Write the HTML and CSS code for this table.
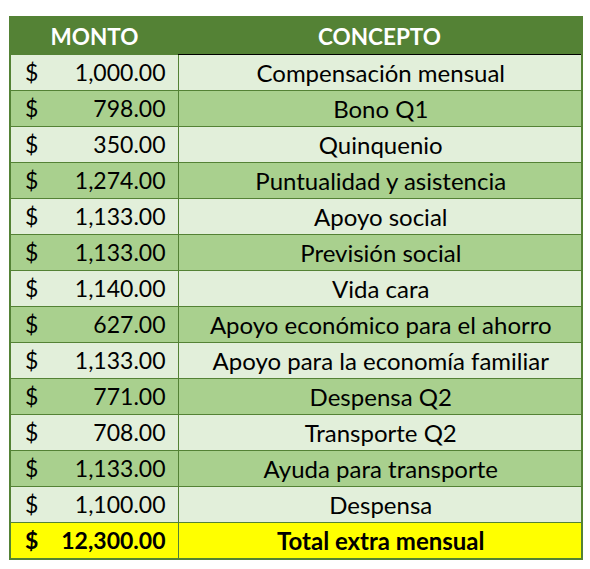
FILE: index.html
```html
<!DOCTYPE html>
<html lang="es">
<head>
<meta charset="utf-8">
<title>Monto y concepto</title>
<link rel="stylesheet" href="styles.css">
</head>
<body>
<table class="sheet">
  <thead>
    <tr><th class="h-monto">MONTO</th><th class="h-concepto">CONCEPTO</th></tr>
  </thead>
  <tbody>
    <tr class="light"><td class="amt"><span class="cur">$</span><span class="num">1,000.00</span></td><td class="txt">Compensación mensual</td></tr>
    <tr class="dark"><td class="amt"><span class="cur">$</span><span class="num">798.00</span></td><td class="txt">Bono Q1</td></tr>
    <tr class="light"><td class="amt"><span class="cur">$</span><span class="num">350.00</span></td><td class="txt">Quinquenio</td></tr>
    <tr class="dark"><td class="amt"><span class="cur">$</span><span class="num">1,274.00</span></td><td class="txt">Puntualidad y asistencia</td></tr>
    <tr class="light"><td class="amt"><span class="cur">$</span><span class="num">1,133.00</span></td><td class="txt">Apoyo social</td></tr>
    <tr class="dark"><td class="amt"><span class="cur">$</span><span class="num">1,133.00</span></td><td class="txt">Previsión social</td></tr>
    <tr class="light"><td class="amt"><span class="cur">$</span><span class="num">1,140.00</span></td><td class="txt">Vida cara</td></tr>
    <tr class="dark"><td class="amt"><span class="cur">$</span><span class="num">627.00</span></td><td class="txt">Apoyo económico para el ahorro</td></tr>
    <tr class="light"><td class="amt"><span class="cur">$</span><span class="num">1,133.00</span></td><td class="txt">Apoyo para la economía familiar</td></tr>
    <tr class="dark"><td class="amt"><span class="cur">$</span><span class="num">771.00</span></td><td class="txt">Despensa Q2</td></tr>
    <tr class="light"><td class="amt"><span class="cur">$</span><span class="num">708.00</span></td><td class="txt">Transporte Q2</td></tr>
    <tr class="dark"><td class="amt"><span class="cur">$</span><span class="num">1,133.00</span></td><td class="txt">Ayuda para transporte</td></tr>
    <tr class="light"><td class="amt"><span class="cur">$</span><span class="num">1,100.00</span></td><td class="txt">Despensa</td></tr>
    <tr class="total"><td class="amt"><span class="cur">$</span><span class="num">12,300.00</span></td><td class="txt">Total extra mensual</td></tr>
  </tbody>
</table>
</body>
</html>
```

FILE: styles.css
```css
html, body {
  margin: 0;
  padding: 0;
  background: #ffffff;
}

body {
  padding: 16px 0 0 9px;
  font-family: Lato, "Open Sans", sans-serif;
  color: #000000;
}

.sheet {
  border-collapse: collapse;
  width: 574px;
  border: 2px solid #548235;
  table-layout: fixed;
}

.sheet th {
  background: #548235;
  color: #ffffff;
  font-weight: 700;
  font-size: 22.5px;
  height: 36px;
  padding: 0;
  text-align: center;
  border: none;
}

.sheet th.h-monto {
  width: 167px;
}

.sheet th.h-concepto {
  border-bottom: 1px solid #000000;
}

.sheet td {
  height: 35px;
  padding: 0;
  border: 1px solid #548235;
  font-size: 24px;
  line-height: 1;
  vertical-align: middle;
}

.sheet td.amt {
  padding: 0 12px 0 14px;
  font-size: 23px;
}

.sheet td.amt .cur {
  float: left;
}

.sheet td.amt .num {
  float: right;
}

.sheet td.amt::after {
  content: "";
  display: block;
  clear: both;
}

.sheet td.txt {
  text-align: center;
  padding-left: 2px;
}

.light td {
  background: #e2efda;
}

.dark td {
  background: #a9d08e;
}

.total td {
  background: #ffff00;
  font-weight: 700;
}
```
